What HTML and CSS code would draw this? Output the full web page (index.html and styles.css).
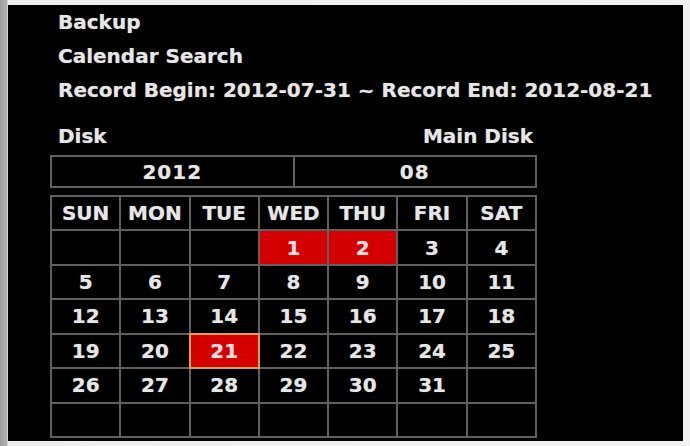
FILE: index.html
```html
<!DOCTYPE html>
<html>
<head>
<meta charset="utf-8">
<link rel="stylesheet" href="styles.css">
</head>
<body>
<div class="frame">
  <div class="panel">
    <div class="content">
      <div class="line">Backup</div>
      <div class="line">Calendar Search</div>
      <div class="line">Record Begin: 2012-07-31 ~ Record End: 2012-08-21</div>
      <div class="disk-row"><span>Disk</span><span>Main Disk</span></div>
      <div class="ym">
        <div class="ym-cell">2012</div>
        <div class="ym-cell ym-month">08</div>
      </div>
      <div class="cal">
        <div class="c">SUN</div><div class="c">MON</div><div class="c">TUE</div><div class="c">WED</div><div class="c">THU</div><div class="c">FRI</div><div class="c">SAT</div>
        <div class="c"></div><div class="c"></div><div class="c"></div><div class="c rec">1</div><div class="c rec">2</div><div class="c">3</div><div class="c">4</div>
        <div class="c">5</div><div class="c">6</div><div class="c">7</div><div class="c">8</div><div class="c">9</div><div class="c">10</div><div class="c">11</div>
        <div class="c">12</div><div class="c">13</div><div class="c">14</div><div class="c">15</div><div class="c">16</div><div class="c">17</div><div class="c">18</div>
        <div class="c">19</div><div class="c">20</div><div class="c rec sel">21</div><div class="c">22</div><div class="c">23</div><div class="c">24</div><div class="c">25</div>
        <div class="c">26</div><div class="c">27</div><div class="c">28</div><div class="c">29</div><div class="c">30</div><div class="c">31</div><div class="c"></div>
        <div class="c"></div><div class="c"></div><div class="c"></div><div class="c"></div><div class="c"></div><div class="c"></div><div class="c"></div>
      </div>
    </div>
  </div>
</div>
</body>
</html>
```

FILE: styles.css
```css
html, body {
  margin: 0;
  padding: 0;
}
body {
  width: 690px;
  height: 446px;
  overflow: hidden;
  background: #e2e2e2;
  font-family: "DejaVu Sans", Verdana, sans-serif;
  font-weight: bold;
  font-size: 20px;
  color: #e6e6e6;
  text-shadow: 0 0 1px rgba(230, 230, 230, 0.55);
}
.frame {
  height: 446px;
  box-sizing: border-box;
  padding: 5px 7px 5px 8px;
  background: linear-gradient(to right, #9c9c9c 0, #b4b4b4 7px, #ededed 8px, #f2f2f2 100%);
}
.panel {
  height: 436px;
  background: #000;
  padding-left: 42px;
  box-sizing: border-box;
}
.content {
  width: 487px;
}
.line {
  height: 34px;
  line-height: 34px;
  padding-left: 8px;
  white-space: nowrap;
}
.disk-row {
  margin-top: 12px;
  height: 34px;
  line-height: 34px;
  padding: 0 4px 0 8px;
  display: flex;
  justify-content: space-between;
}
.ym {
  margin-top: 2px;
  height: 33px;
  box-sizing: border-box;
  border: 2px solid #606060;
  display: flex;
}
.ym-cell {
  flex: 1;
  display: flex;
  align-items: center;
  justify-content: center;
  letter-spacing: 1px;
}
.ym-month {
  border-left: 2px solid #606060;
}
.cal {
  margin-top: 7px;
  height: 243px;
  box-sizing: border-box;
  background: #606060;
  padding: 2px;
  display: grid;
  grid-template-columns: repeat(7, 1fr);
  grid-template-rows: repeat(7, 1fr);
  gap: 2px;
}
.c {
  background: #000;
  display: flex;
  align-items: center;
  justify-content: center;
}
.rec {
  background: #d40000;
  color: #f4dede;
}
.sel {
  outline: 2px solid #dba24e;
  outline-offset: 0;
}
```
